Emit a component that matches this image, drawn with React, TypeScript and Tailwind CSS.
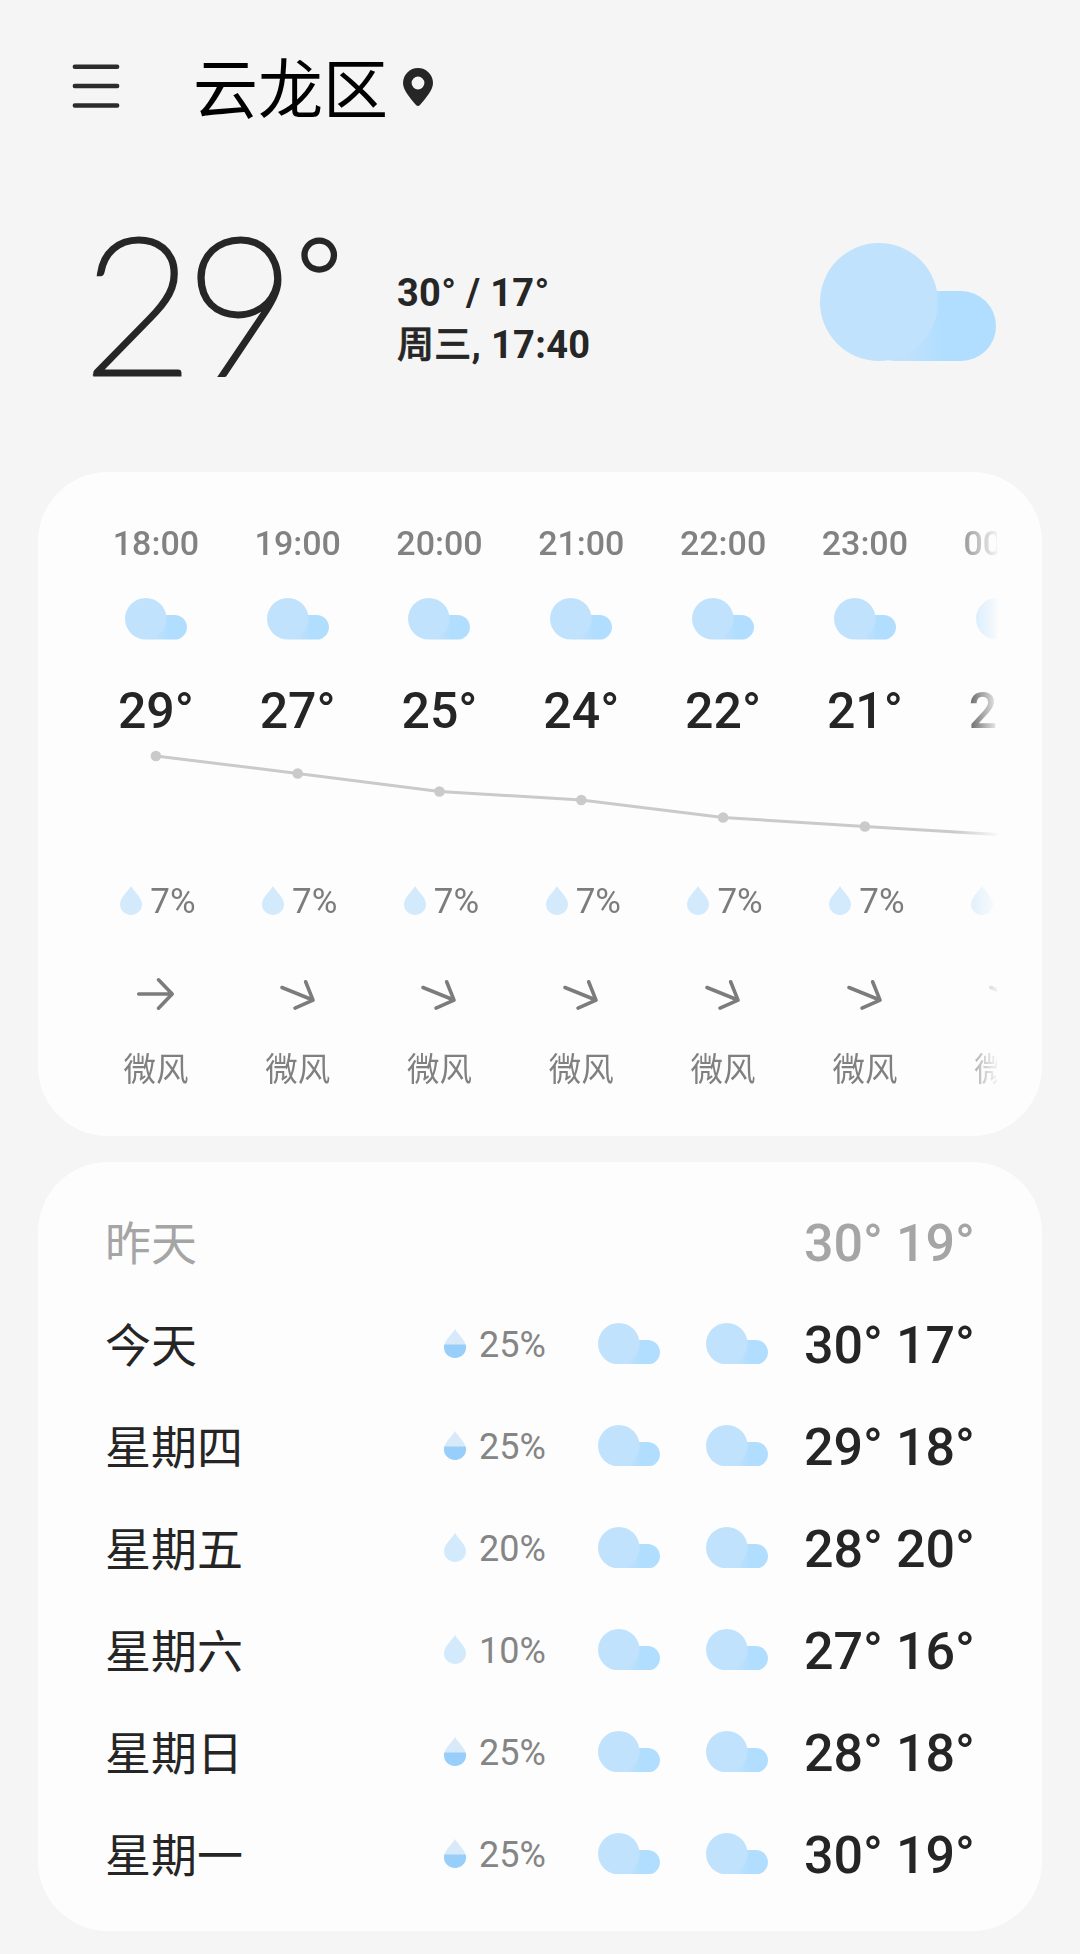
import { useId } from "react";

type Hour = { time: string; temp: number; rain: number; turn: number; wind: string; y: number };
type Day = { name: string; rain?: number; high: number; low: number; past?: boolean };

const hours: Hour[] = [
  { time: "18:00", temp: 29, rain: 7, turn: 0, wind: "微风", y: 14 },
  { time: "19:00", temp: 27, rain: 7, turn: 22, wind: "微风", y: 31.5 },
  { time: "20:00", temp: 25, rain: 7, turn: 22, wind: "微风", y: 49.5 },
  { time: "21:00", temp: 24, rain: 7, turn: 22, wind: "微风", y: 58 },
  { time: "22:00", temp: 22, rain: 7, turn: 22, wind: "微风", y: 75.5 },
  { time: "23:00", temp: 21, rain: 7, turn: 22, wind: "微风", y: 84.5 },
  { time: "00:00", temp: 20, rain: 7, turn: 22, wind: "微风", y: 93 },
];

const days: Day[] = [
  { name: "昨天", high: 30, low: 19, past: true },
  { name: "今天", rain: 25, high: 30, low: 17 },
  { name: "星期四", rain: 25, high: 29, low: 18 },
  { name: "星期五", rain: 20, high: 28, low: 20 },
  { name: "星期六", rain: 10, high: 27, low: 16 },
  { name: "星期日", rain: 25, high: 28, low: 18 },
  { name: "星期一", rain: 25, high: 30, low: 19 },
];

const STEP = 141.8;

function Cloud({ className }: { className: string }) {
  const id = useId();
  return (
    <svg viewBox="0 0 176 118" className={className}>
      <defs>
        <linearGradient id={id} x1="0" x2="1">
          <stop offset="0.35" stopColor="#c0e1fc" />
          <stop offset="0.6" stopColor="#b1deff" />
        </linearGradient>
      </defs>
      <rect x="40" y="48" width="136" height="70" rx="35" fill={`url(#${id})`} />
      <circle cx="59" cy="59" r="59" fill="#c0e2fc" />
    </svg>
  );
}

function Drop({ half = false }: { half?: boolean }) {
  return (
    <svg viewBox="0 0 22 29" className="mb-1 h-[29px] w-[22px] shrink-0">
      <path d="M11 0C12.3 3.6 22 11 22 18.2A11 10.8 0 0 1 0 18.2C0 11 9.7 3.6 11 0Z" fill={half ? "#d8eafa" : "#d2eafc"} />
      {half && <path d="M0.2 15.5H21.8Q22 17 22 18.2A11 10.8 0 0 1 0 18.2Q0 17 0.2 15.5Z" fill="#97cffa" />}
    </svg>
  );
}

function Arrow({ turn }: { turn: number }) {
  return (
    <svg viewBox="0 0 40 40" className="size-10">
      <path
        d="M2.7 20H36M22.5 5.8L36.2 20L22.5 34.2"
        transform={`rotate(${turn} 20 20)`}
        fill="none"
        stroke="#7c7c7c"
        strokeWidth="3.6"
        strokeLinecap="round"
        strokeLinejoin="round"
      />
    </svg>
  );
}

function Header() {
  return (
    <header className="flex h-[172px] items-center pl-[72px]">
      <svg viewBox="0 0 48 44" className="h-[44px] w-[48px]">
        <path d="M2.8 2.7H45.2M2.8 22H45.2M2.8 41.5H45.2" stroke="#2c2c2c" strokeWidth="4.4" strokeLinecap="round" />
      </svg>
      <h1 className="mt-[10px] ml-[73px] text-[65px] leading-[96px] font-normal text-black">云龙区</h1>
      <svg viewBox="0 0 30 38" className="mt-[2px] ml-[15px] h-[38px] w-[30px]">
        <path
          fillRule="evenodd"
          fill="#262626"
          d="M15 0A15 15 0 0 1 30 15C30 22 23 30 16.8 37.2Q15 38.8 13.2 37.2C7 30 0 22 0 15A15 15 0 0 1 15 0ZM15 8.6A6.4 6.4 0 1 0 15 21.4A6.4 6.4 0 1 0 15 8.6Z"
        />
      </svg>
    </header>
  );
}

function Current() {
  return (
    <section className="flex h-[300px] items-start pt-[49px] text-[#262626]">
      <div className="ml-[83px] flex w-[314px] items-start font-['Lato'] font-thin [-webkit-text-stroke:5px_#262626]">
        <span className="-mt-[7px] text-[190px] leading-[172px] tracking-[-8px]">29</span>
        <span className="-mt-[2px] ml-[9px] text-[110px] leading-[112px]">°</span>
      </div>
      <div className="pt-[46px] text-[38px] leading-[52px] font-bold tracking-[0.3px]">
        <p>30° / 17°</p>
        <p>
          <span className="font-['Noto_Sans_CJK_SC'] text-[37px] leading-none font-medium [-webkit-text-stroke:0.7px_#262626]">周三</span>, 17:40
        </p>
      </div>
      <Cloud className="mt-[22px] mr-[84px] ml-auto h-[118px] w-[176px]" />
    </section>
  );
}

function TempLine() {
  const x = (i: number) => (i + 0.5) * STEP;
  return (
    <svg viewBox="0 0 912 100" className="absolute top-[240px] left-0 h-[100px] w-[912px]">
      <polyline points={hours.map((h, i) => `${x(i)},${h.y}`).join(" ")} fill="none" stroke="#cacaca" strokeWidth="3" />
      {hours.map((h, i) => (
        <circle key={h.time} cx={x(i)} cy={h.y} r="5.3" fill="#cacaca" />
      ))}
    </svg>
  );
}

function Hourly() {
  return (
    <section className="mx-[38px] h-[664px] rounded-[70px] bg-[#fdfdfd] pt-[30px] pl-[47px]">
      <div className="relative h-[600px] w-[912px] overflow-hidden [mask-image:linear-gradient(to_right,#000_870px,transparent_916px)]">
        <div className="flex">
          {hours.map((h) => (
            <div key={h.time} className="flex w-[141.8px] shrink-0 flex-col items-center">
              <span className="mt-[21px] text-[34px] leading-10 font-medium text-[#828282]">{h.time}</span>
              <Cloud className="mt-[35px] h-[41.5px] w-[62px]" />
              <span className="mt-[41px] text-[50px] leading-[60px] font-medium text-[#252525]">{h.temp}°</span>
              <div className="mt-[139.5px] flex h-11 items-center gap-2 pl-1 text-[35px] text-[#7c7c7c]">
                <Drop />
                <span className="leading-[44px]">{h.rain}%</span>
              </div>
              <div className="mt-[49.5px]">
                <Arrow turn={h.turn} />
              </div>
              <span className="mt-[34px] text-[32.5px] leading-[44px] text-[#808080]">{h.wind}</span>
            </div>
          ))}
        </div>
        <TempLine />
      </div>
    </section>
  );
}

function DayRow({ day }: { day: Day }) {
  return (
    <li className={`flex h-[102px] items-center ${day.past ? "text-[#a5a5a5]" : "text-[#252525]"}`}>
      <span className="w-[339px] text-[46px] leading-[60px]">{day.name}</span>
      <div className="flex w-[154px] items-center gap-[13px] pb-0.5 text-[36px] text-[#858585]">
        {day.rain !== undefined && (
          <>
            <Drop half={day.rain >= 25} />
            <span className="leading-[44px]">{day.rain}%</span>
          </>
        )}
      </div>
      <div className="flex w-[206px] gap-[46px] pb-[5px]">
        {!day.past && (
          <>
            <Cloud className="h-[41.5px] w-[62px]" />
            <Cloud className="h-[41.5px] w-[62px]" />
          </>
        )}
      </div>
      <span className="text-[52px] leading-[60px] font-medium whitespace-nowrap">
        {day.high}° {day.low}°
      </span>
    </li>
  );
}

export default function App() {
  return (
    <main className="h-[1954px] w-[1080px] overflow-hidden bg-[#f5f5f5] font-['Roboto','Noto_Sans_CJK_SC',sans-serif]">
      <Header />
      <Current />
      <Hourly />
      <ul className="mx-[38px] mt-[26px] h-[769px] rounded-[70px] bg-[#fdfdfd] pt-[31px] pl-[67px]">
        {days.map((d) => (
          <DayRow key={d.name} day={d} />
        ))}
      </ul>
    </main>
  );
}
